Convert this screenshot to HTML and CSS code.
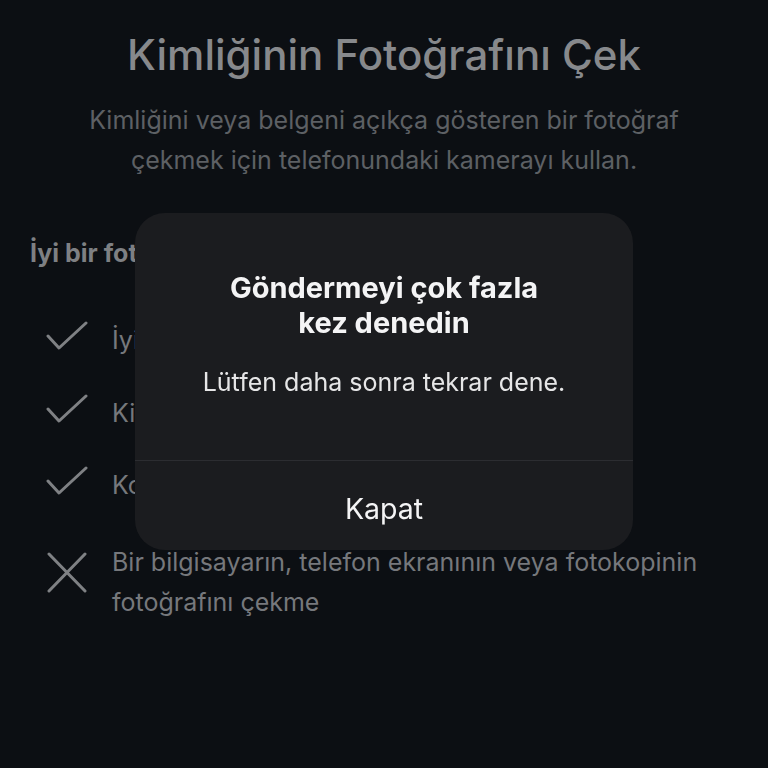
FILE: index.html
```html
<!DOCTYPE html>
<html lang="tr">
<head>
    <meta charset="UTF-8">
    <meta name="viewport" content="width=device-width, initial-scale=1.0">
    <title>Kimliğinin Fotoğrafını Çek</title>
    <link rel="stylesheet" href="styles.css">
</head>
<body>
    <div class="page">
        <h1 class="title">Kimliğinin Fotoğrafını Çek</h1>
        <p class="subtitle">Kimliğini veya belgeni açıkça gösteren bir fotoğraf çekmek için telefonundaki kamerayı kullan.</p>

        <h3 class="tips-title">İyi bir fotoğraf için ipuçları</h3>
        <ul class="tips">
            <li class="tip">
                <svg class="tip-icon" viewBox="0 0 44 40"><path d="M2 16 L13 28 L40 3"/></svg>
                <span>İyi aydınlatılmış bir yerde çek</span>
            </li>
            <li class="tip">
                <svg class="tip-icon" viewBox="0 0 44 40"><path d="M2 16 L13 28 L40 3"/></svg>
                <span>Kimliğinin tamamı görünsün</span>
            </li>
            <li class="tip">
                <svg class="tip-icon" viewBox="0 0 44 40"><path d="M2 16 L13 28 L40 3"/></svg>
                <span>Kontrol et, bulanık olmasın</span>
            </li>
            <li class="tip tip-no">
                <svg class="tip-icon" viewBox="0 0 44 44"><path d="M3 2 L39 39 M39 2 L3 39"/></svg>
                <span>Bir bilgisayarın, telefon ekranının veya fotokopinin fotoğrafını çekme</span>
            </li>
        </ul>
    </div>

    <div class="overlay">
        <div class="dialog">
            <div class="dialog-body">
                <h2 class="dialog-title">Göndermeyi çok fazla<br>kez denedin</h2>
                <p class="dialog-text">Lütfen daha sonra tekrar dene.</p>
            </div>
            <button class="dialog-btn">Kapat</button>
        </div>
    </div>
</body>
</html>
```

FILE: styles.css
```css
* {
    box-sizing: border-box;
}

html, body {
    margin: 0;
    height: 100%;
}

body {
    background: #0c0f13;
    font-family: 'Inter', 'Roboto', sans-serif;
    overflow: hidden;
}

.page {
    padding: 30px 30px 0;
}

.title {
    margin: 0;
    text-align: center;
    font-size: 42px;
    line-height: 50px;
    font-weight: 500;
    color: #87898c;
}

.subtitle {
    margin: 20px auto 0;
    width: 630px;
    text-align: center;
    font-size: 25px;
    line-height: 40px;
    color: #5d6064;
}

.tips-title {
    margin: 58px 0 0;
    font-size: 25px;
    line-height: 30px;
    font-weight: 700;
    color: #7e8083;
}

.tips {
    list-style: none;
    margin: 52px 0 0;
    padding: 0;
}

.tip {
    display: flex;
    align-items: flex-start;
    gap: 22px;
    margin-bottom: 32.5px;
    font-size: 25px;
    line-height: 40px;
    color: #76787c;
}

.tip-no {
    padding-top: 4px;
}

.tip-icon {
    flex: none;
    width: 44px;
    height: 40px;
    margin-left: 16px;
    fill: none;
    stroke: #7f8184;
    stroke-width: 3;
    stroke-linecap: round;
    stroke-linejoin: round;
}

.tip-no .tip-icon {
    height: 44px;
    margin-top: 10px;
}

.overlay {
    position: fixed;
    inset: 0;
    display: flex;
    justify-content: center;
    padding-top: 213px;
}

.dialog {
    width: 498px;
    height: 337px;
    background: #1b1c1f;
    border-radius: 30px;
    display: flex;
    flex-direction: column;
    overflow: hidden;
}

.dialog-body {
    height: 248px;
    text-align: center;
    padding: 57px 20px 0;
    border-bottom: 1px solid #2c2d31;
}

.dialog-title {
    margin: 0;
    font-size: 29px;
    line-height: 35px;
    font-weight: 700;
    color: #f4f4f5;
}

.dialog-text {
    margin: 27px 0 0;
    font-size: 25px;
    line-height: 30px;
    color: #e6e6e7;
}

.dialog-btn {
    flex: 1;
    background: none;
    border: none;
    font-family: inherit;
    font-size: 28.5px;
    color: #f4f4f5;
    padding: 5px 0 0;
}
```
